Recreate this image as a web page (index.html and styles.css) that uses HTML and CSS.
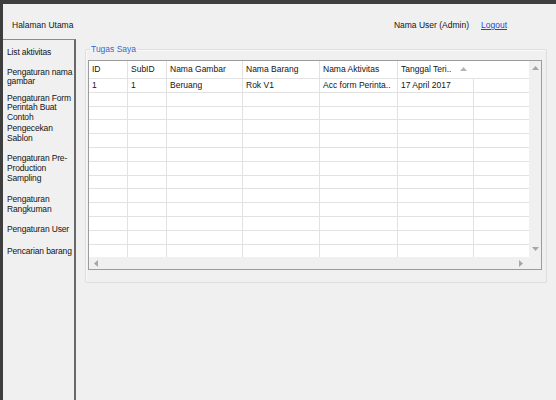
FILE: index.html
```
<!DOCTYPE html>
<html lang="id">
<head>
  <meta charset="UTF-8" />
  <title>Halaman Utama</title>
  <link rel="stylesheet" href="styles.css">
</head>
<body>
  <div class="window">
    <div class="topbar">
      <span class="title">Halaman Utama</span>
      <span class="user">Nama User (Admin)</span>
      <a class="logout" href="#">Logout</a>
    </div>

    <div class="main">
      <nav class="sidebar">
        <a class="menu" href="#">List aktivitas</a>
        <a class="menu" href="#">Pengaturan nama<br>gambar</a>
        <a class="menu tight" href="#">Pengaturan Form<br>Perintah Buat<br>Contoh</a>
        <a class="menu overlap" href="#">Pengecekan<br>Sablon</a>
        <a class="menu" href="#">Pengaturan Pre-<br>Production<br>Sampling</a>
        <a class="menu wide" href="#">Pengaturan<br>Rangkuman</a>
        <a class="menu" href="#">Pengaturan User</a>
        <a class="menu wide" href="#">Pencarian barang</a>
      </nav>

      <section class="content">
        <fieldset class="group">
          <legend>Tugas Saya</legend>
          <div class="grid">
            <div class="cells">
              <div class="row head">
                <div class="cell">ID</div>
                <div class="cell">SubID</div>
                <div class="cell">Nama Gambar</div>
                <div class="cell">Nama Barang</div>
                <div class="cell">Nama Aktivitas</div>
                <div class="cell sorted">Tanggal Teri..
                  <svg class="sort" width="7" height="4" viewBox="0 0 7 4"><path d="M0 4 L3.5 0 L7 4 Z" fill="#b4b4b4"/></svg>
                </div>
                <div class="cell blank"></div>
              </div>
              <div class="row">
                <div class="cell">1</div>
                <div class="cell">1</div>
                <div class="cell">Beruang</div>
                <div class="cell">Rok V1</div>
                <div class="cell">Acc form Perinta..</div>
                <div class="cell">17 April 2017</div>
                <div class="cell"></div>
              </div>
              <!-- empty rows filled below -->
              <div id="emptyRows"></div>
            </div>

            <div class="vscroll">
              <svg width="7" height="4" viewBox="0 0 7 4"><path d="M0 4 L3.5 0 L7 4 Z" fill="#a6a6a6"/></svg>
              <svg width="7" height="4" viewBox="0 0 7 4"><path d="M0 0 L3.5 4 L7 0 Z" fill="#a6a6a6"/></svg>
            </div>
            <div class="hscroll">
              <svg width="4" height="7" viewBox="0 0 4 7"><path d="M4 0 L0 3.5 L4 7 Z" fill="#a6a6a6"/></svg>
              <svg width="4" height="7" viewBox="0 0 4 7"><path d="M0 0 L4 3.5 L0 7 Z" fill="#a6a6a6"/></svg>
            </div>
            <div class="corner"></div>
          </div>
        </fieldset>
      </section>
    </div>
  </div>

  <script>
    // Fill the grid with blank rows like the DataGridView does
    const holder = document.getElementById('emptyRows');
    for (let i = 0; i < 12; i++) {
      const row = document.createElement('div');
      row.className = 'row';
      for (let c = 0; c < 7; c++) {
        const cell = document.createElement('div');
        cell.className = 'cell';
        row.appendChild(cell);
      }
      holder.appendChild(row);
    }
  </script>
</body>
</html>
```

FILE: styles.css
```
html, body {
  margin: 0;
}
body {
  font-family: "Liberation Sans", Arial, sans-serif;
  font-size: 8.5px;
  color: #141414;
  background-color: #f0f0f0;
}
.window {
  height: 400px;
  box-sizing: border-box;
  border-top: 4px solid #3e3e3e;
  border-left: 3px solid #3e3e3e;
  display: flex;
  flex-direction: column;
  overflow: hidden;
}

/* top bar */
.topbar {
  height: 35px;
  box-sizing: border-box;
  padding: 7px 49px 0 9px;
  display: flex;
  align-items: center;
}
.user {
  margin-left: auto;
}
.logout {
  margin-left: 12px;
  color: #2a3fd6;
  text-decoration: underline;
}

/* left menu */
.main {
  flex: 1;
  display: flex;
}
.sidebar {
  border-top: 1px solid #8c8c8c;
  border-right: 2px solid #686868;
  padding: 7.5px 0 0 4px;
  box-sizing: border-box;
  width: 73px;
  display: flex;
  flex-direction: column;
}
.menu {
  color: #141414;
  text-decoration: none;
  line-height: 9.7px;
  letter-spacing: -0.15px;
  white-space: nowrap;
  margin-top: 10.5px;
}
.menu:first-child {
  margin-top: 0;
}
.menu.tight {
  margin-top: 6.6px;
}
.menu.overlap {
  margin-top: 1.4px;
}
.menu.wide {
  margin-top: 12px;
}

/* group box */
.content {
  flex: 1;
  padding: 5px 9px 0 9px;
}
.group {
  margin: 0;
  padding: 6px 4px 12px 2px;
  border: 1px solid #dedede;
  border-radius: 2px;
  box-shadow: inset 1px 1px 0 #fafafa;
  min-width: 0;
}
.group legend {
  margin-left: 2px;
  padding: 0 1px;
  line-height: 10px;
  color: #3768c8;
}

/* data grid */
.grid {
  height: 210px;
  box-sizing: border-box;
  border: 1px solid #9c9c9c;
  background-color: #fff;
  display: grid;
  grid-template-columns: 1fr 12px;
  grid-template-rows: 1fr 12px;
}
.cells {
  overflow: hidden;
}
.row {
  display: grid;
  grid-template-columns: 39px 39px 76px 77px 78px 76px 55px;
  height: 13.8px;
}
.row.head {
  height: 18px;
}
.cell {
  box-sizing: border-box;
  border-right: 1px solid #e2e2e2;
  border-bottom: 1px solid #e2e2e2;
  padding-left: 3px;
  line-height: 13px;
  white-space: nowrap;
  overflow: hidden;
}
.cell:last-child {
  border-right: none;
}
.head .cell {
  line-height: 17px;
}
.head .sorted {
  border-right: none;
}
.sort {
  margin-left: 6px;
  vertical-align: 1px;
}

/* scroll bars */
.vscroll {
  background-color: #f0f0f0;
  display: flex;
  flex-direction: column;
  justify-content: space-between;
  align-items: center;
  padding: 5px 0 6px;
}
.hscroll {
  background-color: #f0f0f0;
  display: flex;
  justify-content: space-between;
  align-items: center;
  padding: 0 6px 0 5px;
}
.corner {
  background-color: #f0f0f0;
}
```
